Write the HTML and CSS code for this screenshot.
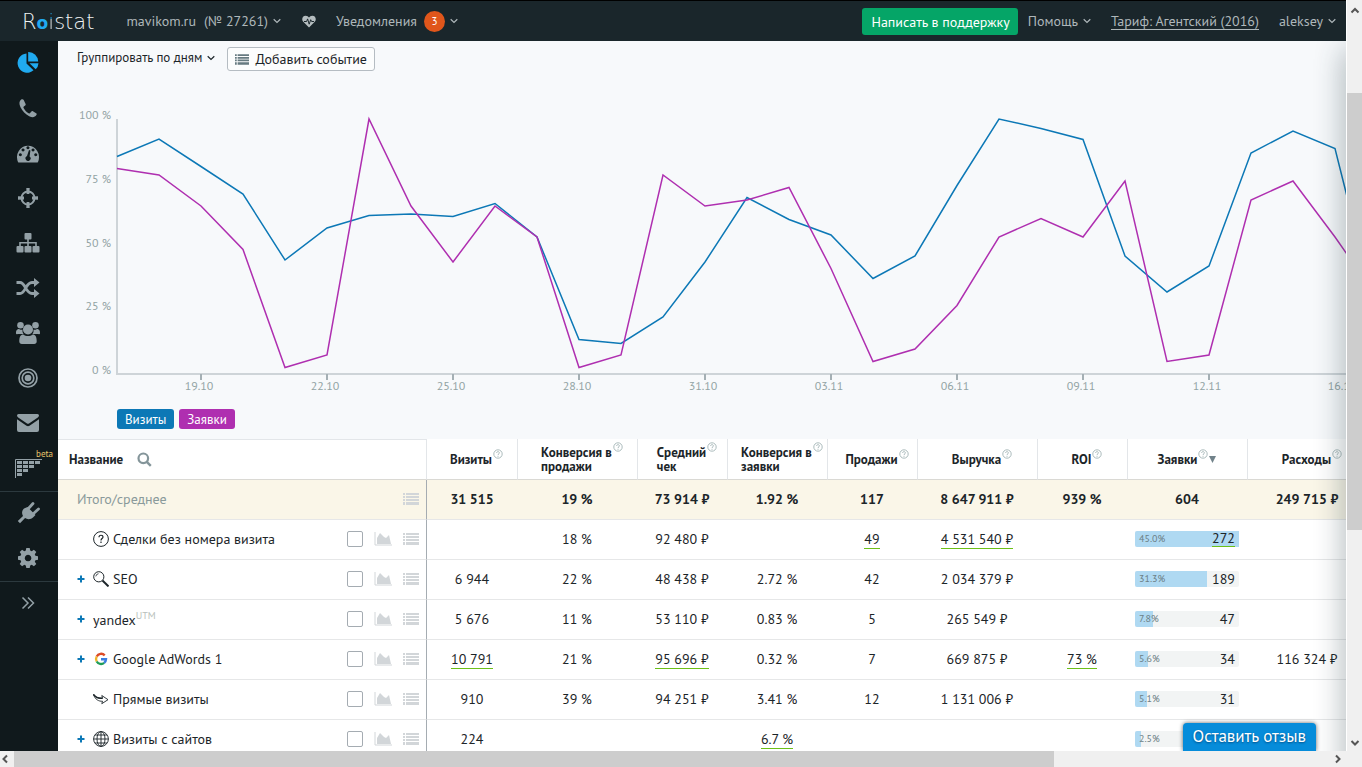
FILE: index.html
```html
<!DOCTYPE html>
<html lang="ru">
<head>
<meta charset="utf-8">
<title>Roistat</title>
<link rel="stylesheet" href="styles.css">
</head>
<body>
<svg class="sprite" aria-hidden="true">
  <symbol id="caret" viewBox="0 0 8 6"><path d="M.7 1.2 4 4.4 7.3 1.2" fill="none" stroke="currentColor" stroke-width="1.2"/></symbol>
  <symbol id="list" viewBox="0 0 16 12"><path d="M0 0h2v2H0zM3 0h13v2H3zM0 3h2v2H0zM3 3h13v2H3zM0 6h2v2H0zM3 6h13v2H3zM0 9h2v3H0zM3 9h13v3H3z" fill="currentColor"/></symbol>
  <symbol id="area" viewBox="0 0 18 14"><path d="M1 0v13h17" fill="none" stroke="currentColor" stroke-width="1"/><path d="M3 12V6l3-5 4 4 2 1 3-3 2 9z" fill="currentColor"/></symbol>
  <symbol id="help" viewBox="0 0 10 10"><circle cx="5" cy="5" r="4.2" fill="none" stroke="currentColor" stroke-width=".9"/><path d="M3.6 4C3.6 2.2 6.4 2.200 6.400 3.900 6.400 4.800 5 4.900 5 6M5 6.800v1" fill="none" stroke="currentColor" stroke-width=".9"/></symbol>
  <symbol id="plus" viewBox="0 0 8 8"><path d="M4 .5v7M.5 4h7" stroke="currentColor" stroke-width="2"/></symbol>
</svg>
<div class="app">
  <header class="topbar">
    <a class="logo" href="#">R<span class="logo-o">o</span><span class="logo-i">i</span>stat</a>
    <button class="link project"><span>mavikom.ru</span><span>(№ 27261)</span><svg class="caret"><use href="#caret"/></svg></button>
    <button class="link heart" aria-label="Состояние"><svg width="14" height="13" viewBox="0 0 14 13"><path d="M7 12.500 1 6.500C-.6 4.500.3.7 3.700.7 5.300.7 6.300 1.500 7 2.600 7.700 1.500 8.700.7 10.300.7c3.400 0 4.300 3.800 2.700 5.800z" fill="#b4bcbf"/><path d="M2 6.500h2.600l1-2.600 1.600 5.300 1.500-4.500.9 1.800H12" fill="none" stroke="#1a262b" stroke-width="1"/></svg></button>
    <button class="link notices"><span>Уведомления</span><span class="badge">3</span><svg class="caret"><use href="#caret"/></svg></button>
    <button class="support">Написать в поддержку</button>
    <button class="link"><span>Помощь</span><svg class="caret"><use href="#caret"/></svg></button>
    <a class="tariff" href="#">Тариф: Агентский (2016)</a>
    <button class="link"><span>aleksey</span><svg class="caret"><use href="#caret"/></svg></button>
  </header>

  <nav class="sidebar" aria-label="Разделы">
    <a class="active" href="#" aria-label="Аналитика"><svg width="24" height="24" viewBox="0 0 24 24"><path d="M10.500 2.500v10l7 6.800A9.600 9.600 0 1 1 10.500 2.500z" fill="#20aaf0"/><path d="M12.200 1a9.600 9.600 0 0 1 10 9.600h-10z" fill="#20aaf0"/><path d="M13.500 12.200h9a9 9 0 0 1-2.800 6z" fill="#20aaf0"/></svg></a>
    <a href="#" aria-label="Звонки"><svg width="20" height="20" viewBox="0 0 20 20"><path d="M3.200 1.600C1 3.500.9 6 2.500 9.300c2 4 5 7 8.700 8.900 3.300 1.600 5.600 1.200 7.200-1.200.5-.8.4-1.400-.3-1.800l-3.200-1.900c-.7-.4-1.200-.2-1.700.4l-1.100 1.400c-.4.5-.9.4-1.500.1-2.300-1.300-3.800-3-5-5.200-.3-.6-.3-1 .2-1.400l1.400-1.100c.6-.5.7-1 .4-1.600L5.700 1.900C5.200 1 4 1 3.200 1.600z"/></svg></a>
    <a href="#" aria-label="Показатели"><svg width="24" height="20" viewBox="0 0 24 20"><path fill-rule="evenodd" d="M2 19A11 11.500 0 1 1 22 19q-.3.500-1 .5H3q-.7 0-1-.5zM4.300 10.200a1.500 1.500 0 1 0 .1 0zM7 5.500a1.500 1.500 0 1 0 .1 0zM11.900 3.200a1.500 1.500 0 1 0 .1 0zM17 5.500a1.500 1.500 0 1 0 .1 0zM19.700 10.200a1.500 1.500 0 1 0 .1 0zM13 7l-2 6.100a2.500 2.500 0 1 0 2.600.3l.8-6z"/></svg></a>
    <a href="#" aria-label="Цели"><svg width="20" height="20" viewBox="0 0 20 20"><circle cx="10" cy="10" r="6.500" fill="none" stroke="#93a0a6" stroke-width="2"/><path d="M8.300 0h3.400l-.3 6H8.600zM8.300 20h3.400l-.3-6H8.600zM0 8.300v3.400l6-.3V8.600zM20 8.300v3.400l-6-.3V8.600z"/></svg></a>
    <a href="#" aria-label="Структура"><svg width="24" height="20" viewBox="0 0 24 20"><rect x="8.500" y="0" width="7" height="6.500" rx="1"/><rect x=".5" y="13" width="7" height="6.500" rx="1"/><rect x="8.500" y="13" width="7" height="6.500" rx="1"/><rect x="16.500" y="13" width="7" height="6.500" rx="1"/><path d="M12 6v7M4 13V9.700h16V13" fill="none" stroke="#93a0a6" stroke-width="1.600"/></svg></a>
    <a href="#" aria-label="Сплит-тесты"><svg width="24" height="20" viewBox="0 0 24 20"><path d="M.5 4.500H4c5.500 0 5.500 11 12 11h3M.5 15.500H4c5.500 0 5.500-11 12-11h3" fill="none" stroke="#93a0a6" stroke-width="2.800"/><path d="M18 0l5.500 4.500L18 9zM18 11l5.500 4.500L18 20z"/></svg></a>
    <a href="#" aria-label="Клиенты"><svg width="26" height="24" viewBox="0 0 26 24"><circle cx="5.500" cy="4.300" r="3.300"/><circle cx="20.500" cy="4.300" r="3.300"/><path d="M1 12.500C.8 9 2.500 8 4 8q2.600 1.300 3.500.6Q7 11.500 8.500 13H3Q1 13.500 1 12.500zM25 12.500C25.200 9 23.500 8 22 8q-2.600 1.300-3.500.6.5 2.900-1 4.400H23q2 .5 2-.5z"/><circle cx="13" cy="8.500" r="5"/><path d="M4.300 20.500c0-4.500 1.200-7 4-7 2.800 2 6.600 2 9.400 0 2.800 0 4 2.500 4 7 0 1.500-1 2.500-2.500 2.500H6.800c-1.500 0-2.500-1-2.500-2.500z"/></svg></a>
    <a href="#" aria-label="Ретаргетинг"><svg width="22" height="22" viewBox="0 0 22 22"><g fill="none" stroke="#93a0a6" stroke-width="1.700"><circle cx="11" cy="11" r="9"/><circle cx="11" cy="11" r="5.800"/></g><circle cx="11" cy="11" r="3.300"/></svg></a>
    <a href="#" aria-label="Письма"><svg width="24" height="20" viewBox="0 0 24 20"><path d="M2.500 1h19q1.500 0 1.500 1.500 0 1-1.200 2L13 10.500q-1 .7-2 0L2.200 4.500Q1 3.500 1 2.500 1 1 2.500 1z"/><path d="M1 6.300l9.500 6.500q1.500.8 3 0L23 6.300V17q0 2-2 2H3q-2 0-2-2z"/></svg></a>
    <a class="beta" href="#" aria-label="Воронка"><svg width="28" height="20" viewBox="0 0 28 20"><path d="M1.500 20V1.500H28" fill="none" stroke="#93a0a6"/><path d="M3 4.500h24M3 8.500h18M3 12.500h12M3 16.500h6" stroke="#93a0a6" stroke-width="3" stroke-dasharray="5 1"/></svg><span>beta</span></a>
    <a class="ruled" href="#" aria-label="Интеграции"><svg width="24" height="24" viewBox="0 0 24 24"><path d="M11.500 6l8 8-2 2c-2.500 2.500-6 2.800-8.400 1.100L4 22.200 1.800 20 7 15C5.500 12.500 5.800 9.800 8 7.600z"/><path d="M12 8l5-5.500M17 13l5.500-5" stroke="#93a0a6" stroke-width="2.800" stroke-linecap="round"/></svg></a>
    <a href="#" aria-label="Настройки"><svg width="20" height="20" viewBox="0 0 20 20"><path fill-rule="evenodd" d="M8.300 0h3.400l.5 2.600 1.500.6L15.900 1.700 18.300 4.100 16.800 6.300l.6 1.500 2.600.5v3.400l-2.600.5-.6 1.500 1.500 2.200-2.400 2.400-2.200-1.500-1.500.6-.5 2.600H8.300l-.5-2.600-1.500-.6-2.200 1.500L1.700 15.900l1.500-2.200-.6-1.500L0 11.700V8.300l2.600-.5.6-1.500L1.700 4.100 4.100 1.700l2.200 1.500 1.500-.6zM10 6.700a3.300 3.300 0 1 0 .1 0z"/></svg></a>
    <button class="ruled" aria-label="Развернуть меню"><svg width="14" height="14" viewBox="0 0 14 14"><path d="M1.500 1.500 7 7l-5.500 5.500M7 1.500 12.500 7 7 12.500" fill="none" stroke="#93a0a6" stroke-width="1.500"/></svg></button>
  </nav>

  <main class="content">
    <div class="toolbar">
      <button class="group-by"><span>Группировать по дням</span><svg class="caret"><use href="#caret"/></svg></button>
      <button class="add-event"><svg width="14" height="11"><use href="#list"/></svg>Добавить событие</button>
    </div>
    <svg class="chart" role="img" aria-label="Визиты и заявки по дням">
      <g class="y-labels">
        <text x="53" y="19">100 %</text><text x="53" y="83">75 %</text><text x="53" y="147">50 %</text><text x="53" y="210">25 %</text><text x="53" y="274">0 %</text>
      </g>
      <g transform="translate(59 0)">
        <path class="axis" d="M0 19v255h1400"/>
        <path class="ticks" d="M84 274v6M210 274v6M336 274v6M462 274v6M588 274v6M714 274v6M840 274v6M966 274v6M1092 274v6"/>
        <g class="x-labels">
          <text x="82" y="290">19.10</text><text x="208" y="290">22.10</text><text x="334" y="290">25.10</text><text x="460" y="290">28.10</text><text x="586" y="290">31.10</text><text x="712" y="290">03.11</text><text x="838" y="290">06.11</text><text x="964" y="290">09.11</text><text x="1090" y="290">12.11</text><text x="1225" y="290">16.11</text>
        </g>
        <polyline class="line visits" points="0,56.500 42,39 84,66.500 126,94 168,160 210,128 252,115.500 294,114 336,116.500 378,103.500 420,137 462,239.500 504,243.500 546,217 588,162 630,97.500 672,119.500 714,135 756,178.500 798,156 840,85.500 882,19 924,28.500 966,39.500 1008,156 1050,192 1092,166 1134,53 1176,31 1218,48.500 1260,216"/>
        <polyline class="line leads" points="0,68.500 42,75 84,106 126,149.500 168,267.500 210,255 252,19 294,106 336,162 378,106 420,137 462,267.500 504,255 546,75 588,106 630,100 672,87.500 714,168.500 756,261.500 798,249 840,205.500 882,137 924,118.500 966,137 1008,81 1050,261.500 1092,255 1134,100 1176,81 1218,137 1260,197"/>
      </g>
    </svg>
    <div class="legend"><button class="tag visits">Визиты</button><button class="tag leads">Заявки</button></div>

    <table class="report">
      <colgroup><col class="w-name"><col class="w90"><col class="w120"><col class="w90"><col class="w100"><col class="w90"><col class="w120"><col class="w90"><col class="w120"><col class="w120"></colgroup>
      <thead>
        <tr>
          <th class="name"><div class="title">Название<button class="icon-btn" aria-label="Поиск"><svg width="15" height="15" viewBox="0 0 15 15"><circle cx="6.300" cy="6.300" r="4.800" fill="none" stroke="#84959a" stroke-width="2.200"/><path d="M9.800 9.800l4 4" stroke="#84959a" stroke-width="2.400"/></svg></button></div></th>
          <th><span class="label">Визиты<svg class="help"><use href="#help"/></svg></span></th>
          <th><span class="label">Конверсия в<svg class="help"><use href="#help"/></svg><br>продажи</span></th>
          <th><span class="label">Средний<svg class="help"><use href="#help"/></svg><br>чек</span></th>
          <th><span class="label">Конверсия в<svg class="help"><use href="#help"/></svg><br>заявки</span></th>
          <th><span class="label">Продажи<svg class="help"><use href="#help"/></svg></span></th>
          <th><span class="label">Выручка<svg class="help"><use href="#help"/></svg></span></th>
          <th><span class="label">ROI<svg class="help"><use href="#help"/></svg></span></th>
          <th class="sorted"><span class="label">Заявки<svg class="help"><use href="#help"/></svg><svg class="sort" viewBox="0 0 7 7"><path d="M0 0h7L3.500 7z" fill="#71828a"/></svg></span></th>
          <th><span class="label">Расходы<svg class="help"><use href="#help"/></svg></span></th>
        </tr>
      </thead>
      <tbody>
        <tr class="total">
          <td class="name"><div class="source"><span class="text">Итого/среднее</span><button class="icon-btn" aria-label="Подробнее"><svg width="16" height="12"><use href="#list"/></svg></button></div></td>
          <td>31 515</td><td>19 %</td><td>73 914 ₽</td><td>1.92 %</td><td>117</td><td>8 647 911 ₽</td><td>939 %</td><td>604</td><td>249 715 ₽</td>
        </tr>
        <tr>
          <td class="name"><div class="source"><span class="plus"></span><svg class="mark" width="16" height="16" viewBox="0 0 16 16"><circle cx="8" cy="8" r="7.400" fill="none" stroke="#1c2529"/><path d="M6 6.300c0-2.800 4-2.600 4-.2C10 7.600 8 7.600 8 9.400M8 10.600v1.400" fill="none" stroke="#1c2529" stroke-width="1.200"/></svg><label class="text" for="r1">Сделки без номера визита</label><input type="checkbox" id="r1"><button class="icon-btn" aria-label="График"><svg width="18" height="14"><use href="#area"/></svg></button><button class="icon-btn" aria-label="Подробнее"><svg width="16" height="12"><use href="#list"/></svg></button></div></td>
          <td></td><td>18 %</td><td>92 480 ₽</td><td></td><td><a href="#">49</a></td><td><a href="#">4 531 540 ₽</a></td><td></td>
          <td><div class="bar"><i style="width:100%"></i><small>45.0%</small><a href="#">272</a></div></td><td></td>
        </tr>
        <tr>
          <td class="name"><div class="source"><button class="plus" aria-label="Развернуть"><svg width="8" height="8"><use href="#plus"/></svg></button><svg class="mark" width="16" height="16" viewBox="0 0 16 16"><circle cx="5.800" cy="5.800" r="5.100" fill="none" stroke="#1c2529"/><path d="M2.800 5.400q.3-2.400 2.700-2.700" fill="none" stroke="#1c2529" stroke-width=".8"/><path d="M9.500 9.500l6 5.900" stroke="#1c2529" stroke-width="2"/></svg><label class="text" for="r2">SEO</label><input type="checkbox" id="r2"><button class="icon-btn" aria-label="График"><svg width="18" height="14"><use href="#area"/></svg></button><button class="icon-btn" aria-label="Подробнее"><svg width="16" height="12"><use href="#list"/></svg></button></div></td>
          <td>6 944</td><td>22 %</td><td>48 438 ₽</td><td>2.72 %</td><td>42</td><td>2 034 379 ₽</td><td></td>
          <td><div class="bar"><i style="width:69%"></i><small>31.3%</small><span>189</span></div></td><td></td>
        </tr>
        <tr>
          <td class="name"><div class="source"><button class="plus" aria-label="Развернуть"><svg width="8" height="8"><use href="#plus"/></svg></button><label class="text" for="r3">yandex<sup>UTM</sup></label><input type="checkbox" id="r3"><button class="icon-btn" aria-label="График"><svg width="18" height="14"><use href="#area"/></svg></button><button class="icon-btn" aria-label="Подробнее"><svg width="16" height="12"><use href="#list"/></svg></button></div></td>
          <td>5 676</td><td>11 %</td><td>53 110 ₽</td><td>0.83 %</td><td>5</td><td>265 549 ₽</td><td></td>
          <td><div class="bar"><i style="width:17%"></i><small>7.8%</small><span>47</span></div></td><td></td>
        </tr>
        <tr>
          <td class="name"><div class="source"><button class="plus" aria-label="Развернуть"><svg width="8" height="8"><use href="#plus"/></svg></button><svg class="mark" width="16" height="16" viewBox="0 0 16 16"><g fill="none" stroke-width="2.400"><path d="M11.700 4.300A5 5 0 0 0 3.700 5.500" stroke="#dd4b26"/><path d="M3.700 5.500a5 5 0 0 0 0 5" stroke="#f0b429"/><path d="M3.700 10.500a5 5 0 0 0 7.500 1.300" stroke="#1f9d58"/><path d="M11.200 11.800A5 5 0 0 0 13 8.200H8" stroke="#3a7de0"/></g></svg><label class="text" for="r4">Google AdWords 1</label><input type="checkbox" id="r4"><button class="icon-btn" aria-label="График"><svg width="18" height="14"><use href="#area"/></svg></button><button class="icon-btn" aria-label="Подробнее"><svg width="16" height="12"><use href="#list"/></svg></button></div></td>
          <td><a href="#">10 791</a></td><td>21 %</td><td><a href="#">95 696 ₽</a></td><td>0.32 %</td><td>7</td><td>669 875 ₽</td><td><a href="#">73 %</a></td>
          <td><div class="bar"><i style="width:12.500%"></i><small>5.6%</small><span>34</span></div></td><td>116 324 ₽</td>
        </tr>
        <tr>
          <td class="name"><div class="source"><span class="plus"></span><svg class="mark" width="16" height="16" viewBox="0 0 16 16"><path d="M.5 3.500C3 7 6 7.600 9.500 7.300L8.800 4.500 15 8.700l-6.200 4 .7-2.500C6 10.600 2 8.500.5 3.500z" fill="#fff" stroke="#1c2529" stroke-width=".9"/><path d="M.5 3.500C3 7 6 7.600 9.500 7.300" fill="none" stroke="#1c2529" stroke-width="1.500"/></svg><label class="text" for="r5">Прямые визиты</label><input type="checkbox" id="r5"><button class="icon-btn" aria-label="График"><svg width="18" height="14"><use href="#area"/></svg></button><button class="icon-btn" aria-label="Подробнее"><svg width="16" height="12"><use href="#list"/></svg></button></div></td>
          <td>910</td><td>39 %</td><td>94 251 ₽</td><td>3.41 %</td><td>12</td><td>1 131 006 ₽</td><td></td>
          <td><div class="bar"><i style="width:11.500%"></i><small>5.1%</small><span>31</span></div></td><td></td>
        </tr>
        <tr>
          <td class="name"><div class="source"><button class="plus" aria-label="Развернуть"><svg width="8" height="8"><use href="#plus"/></svg></button><svg class="mark" width="16" height="16" viewBox="0 0 16 16"><g fill="none" stroke="#1c2529" stroke-width=".9"><circle cx="8" cy="8" r="7.400"/><ellipse cx="8" cy="8" rx="4" ry="7.400"/><path d="M8 .5v15M.5 8h15M2 4h12M2 12h12"/></g></svg><label class="text" for="r6">Визиты с сайтов</label><input type="checkbox" id="r6"><button class="icon-btn" aria-label="График"><svg width="18" height="14"><use href="#area"/></svg></button><button class="icon-btn" aria-label="Подробнее"><svg width="16" height="12"><use href="#list"/></svg></button></div></td>
          <td>224</td><td></td><td></td><td><a href="#">6.7 %</a></td><td></td><td></td><td></td>
          <td><div class="bar"><i style="width:6%"></i><small>2.5%</small></div></td><td></td>
        </tr>
      </tbody>
    </table>
    <div class="edge-shadow"></div>
    <button class="feedback">Оставить отзыв</button>
  </main>

  <div class="vbar">
    <svg width="16" height="20" viewBox="0 0 16 20"><path d="M4.500 12.500 8 9l3.500 3.500" fill="none" stroke="#555" stroke-width="2"/></svg>
    <div class="rail"><div class="thumb"></div></div>
    <svg width="16" height="16" viewBox="0 0 16 16"><path d="M4.500 6 8 9.500 11.500 6" fill="none" stroke="#555" stroke-width="2"/></svg>
  </div>
  <div class="hbar">
    <svg width="14" height="16" viewBox="0 0 14 16"><path d="M7 4.500 3.500 8 7 11.500" fill="none" stroke="#555" stroke-width="2"/></svg>
    <div class="rail"><div class="thumb"></div></div>
    <svg width="16" height="16" viewBox="0 0 16 16"><path d="M6 4.500 9.500 8 6 11.500" fill="none" stroke="#555" stroke-width="2"/></svg>
  </div>
</div>
</body>
</html>
```
FILE: styles.css
```css
* { box-sizing: border-box; }
body {
  margin: 0;
  font: 14px/16px "PT Sans", Roboto, "Noto Sans", sans-serif;
  color: #1c2529;
}
button { padding: 0; border: 0; background: none; font: inherit; color: inherit; }
a { color: inherit; text-decoration: none; }
svg { display: block; flex: none; }
.sprite { position: absolute; width: 0; height: 0; }
.caret { width: 8px; height: 6px; }

.app {
  display: grid;
  grid-template: 41px minmax(0, 1fr) 16px / 58px minmax(0, 1fr) 16px;
  height: 100vh;
  overflow: hidden;
}

/* Top bar */
.topbar {
  grid-area: 1 / 1 / 2 / 3;
  display: flex;
  align-items: center;
  padding: 0 10px 0 22px;
  border-top: 1px solid #000;
  background: #1a262b;
  color: #aeb7ba;
}
.logo { padding-top: 2px; font: 200 21px/24px "DejaVu Sans", sans-serif; color: #eef2f3; }
.logo-o { color: #20aaf0; font-weight: 700; font-size: 17px; }
.logo-i {
  color: transparent;
  background: linear-gradient(#20aaf0 9px, #eef2f3 9px);
  background-clip: text;
}
.link { display: flex; align-items: center; gap: 5px; }
.project { gap: 8px; margin-left: 32px; }
.project .caret { margin-left: -3px; }
.heart { margin-left: 21px; }
.notices { margin-left: 20px; }
.notices .badge { margin-left: 2px; }
.badge {
  width: 21px;
  border-radius: 50%;
  background: #e0561b;
  color: #fff;
  font-size: 11px;
  line-height: 21px;
  text-align: center;
}
.support {
  margin-left: auto;
  margin-right: 10px;
  height: 27px;
  padding: 2px 8px 0 9px;
  border-radius: 3px;
  background: #05a567;
  color: #fff;
}
.tariff { margin: 0 20px; border-bottom: 1px solid #aeb7ba; }

/* Side navigation */
.sidebar {
  grid-area: 2 / 1;
  display: flex;
  flex-direction: column;
  overflow: hidden;
  background: #10191c;
}
.sidebar a, .sidebar button {
  display: flex;
  flex: none;
  align-items: center;
  justify-content: center;
  height: 45px;
  padding: 0 2px 2px 0;
}
.sidebar svg { fill: #93a0a6; }
.sidebar .ruled { border-top: 1px solid #2c393e; }
.sidebar .beta { position: relative; }
.beta span {
  position: absolute;
  top: 3px;
  right: 5px;
  color: #e8c26a;
  font-size: 9px;
  line-height: 10px;
}

/* Content */
.content {
  grid-area: 2 / 2;
  position: relative;
  overflow: hidden;
  background: #f7f9fb;
}
.toolbar { display: flex; align-items: center; gap: 12px; padding: 6px 19px 0; }
.group-by { display: flex; align-items: center; gap: 5px; padding-bottom: 2px; font-size: 13px; }
.add-event {
  display: flex;
  align-items: center;
  gap: 6px;
  height: 24px;
  padding: 0 7px;
  border: 1px solid #b5bcc2;
  border-radius: 3px;
  background: #fcfdfd;
}
.add-event svg { color: #667a80; }

.chart { width: 100%; height: 294px; margin-top: 29px; overflow: hidden; }
.chart text { fill: #92a3a4; font-size: 12px; }
.y-labels { text-anchor: end; }
.x-labels { text-anchor: middle; }
.axis { fill: none; stroke: #ced4d8; stroke-width: 2; }
.ticks { stroke: #a4afb4; stroke-width: 2; }
.line { fill: none; stroke-width: 1.5px; }
.line.visits { stroke: #0c78b6; }
.line.leads { stroke: #af2fb0; }

.legend { display: flex; gap: 5px; padding: 15px 59px 10px; }
.tag { height: 20px; padding: 1px 8px 0; border-radius: 3px; color: #fff; font-size: 13px; }
.tag.visits { background: #0c78b6; }
.tag.leads { background: #af2fb0; }

/* Report */
.report {
  table-layout: fixed;
  width: 1309px;
  border-collapse: separate;
  border-spacing: 0;
  background: #fff;
}
.w-name { width: 369px; }
.w90 { width: 90px; }
.w100 { width: 100px; }
.w120 { width: 120px; }
.report th {
  height: 41px;
  padding: 2px 2px 0 0;
  border-bottom: 1px solid #dad9d4;
  border-left: 1px solid #e3e6e9;
  font-size: 13px;
  line-height: 14px;
}
.report th.name { padding: 0; border-top: 1px solid #e3e6e9; border-right: 1px solid #e3e6e9; border-left: 0; }
.report th.name + th { border-left: 0; }
.report th.sorted { padding-right: 20px; }
.title { display: flex; align-items: center; gap: 14px; padding-left: 11px; }
.label { display: inline-block; position: relative; text-align: left; }
.help {
  position: absolute;
  top: -4px;
  left: 100%;
  width: 10px;
  height: 10px;
  margin-left: 1px;
  color: #a3b4b6;
}
.sort { position: absolute; top: 3px; left: 100%; width: 7px; height: 7px; margin-left: 12px; }
.report td {
  height: 40px;
  padding: 0 0 2px;
  border-bottom: 1px solid #e6e7e8;
  text-align: center;
}
.report td.name { padding: 0; border-right: 1px solid #a5acb2; }
.total td { background: #faf6e8; font-weight: 700; }
.total td.name { color: #8a9a9b; font-weight: 400; }
.source { display: flex; align-items: center; gap: 4px; padding: 0 7px 1px 19px; text-align: left; }
.source .plus { width: 8px; margin-right: 4px; color: #0c78b6; }
.source .text { flex: 1; }
.source .text sup { color: #b9bfbb; font-size: 10px; line-height: 10px; }
.source .icon-btn { margin-left: 7px; color: #d2d6d9; }
.source input {
  appearance: none;
  width: 16px;
  height: 16px;
  margin: 0;
  border: 1px solid #a5acb2;
  border-radius: 2px;
  background: #fff;
}
.report td a { border-bottom: 1px solid #6cc017; }
.bar {
  position: relative;
  display: flex;
  align-items: center;
  justify-content: space-between;
  height: 16px;
  margin: 0 8px;
  padding: 0 4px;
  border-radius: 2px;
  background: #f2f4f4;
}
.bar i { position: absolute; inset: 0 auto 0 0; border-radius: 2px 0 0 2px; background: #afd9f2; }
.bar small { position: relative; color: #6c7f86; font-size: 10px; }
.bar span, .bar a { position: relative; }

.edge-shadow {
  position: absolute;
  top: 8px;
  right: -20px;
  bottom: -40px;
  width: 20px;
  box-shadow: 0 0 30px rgba(30, 55, 65, .45);
}
.feedback {
  position: absolute;
  right: 30px;
  bottom: 0;
  height: 28px;
  padding: 0 10px 2px;
  border-radius: 4px 4px 0 0;
  background: #068cda;
  box-shadow: 0 0 4px rgba(0, 0, 0, .6);
  color: #fff;
  font-size: 17px;
  text-shadow: 0 1px 2px rgba(0, 40, 80, .6);
}

/* Window scroll bars */
.vbar, .hbar { display: flex; background: #f0f0f0; }
.vbar { grid-area: 1 / 3 / 3 / 4; flex-direction: column; border-left: 1px solid #fff; }
.hbar { grid-area: 3 / 1 / 4 / 4; padding-right: 16px; }
.rail { display: flex; flex: 1; }
.vbar .rail { flex-direction: column; padding-top: 73px; }
.thumb { background: #cdcdcd; }
.vbar .thumb { height: 68%; }
.hbar .thumb { width: 79%; }
```
